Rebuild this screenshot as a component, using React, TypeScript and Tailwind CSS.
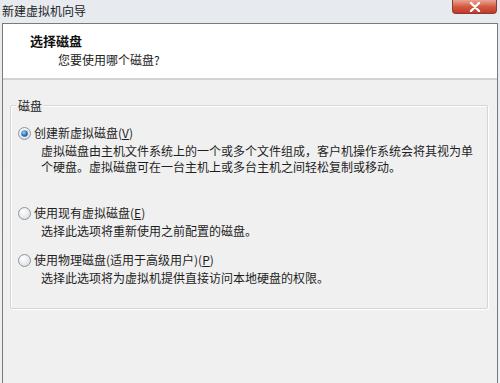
const font = "font-['Microsoft_YaHei','Noto_Sans_CJK_SC',sans-serif]";

type Option = {
  label: string;
  key: string;
  desc: string[];
  checked?: boolean;
  gap: string;
};

const options: Option[] = [
  {
    label: "创建新虚拟磁盘(",
    key: "V",
    desc: [
      "虚拟磁盘由主机文件系统上的一个或多个文件组成，客户机操作系统会将其视为单",
      "个硬盘。虚拟磁盘可在一台主机上或多台主机之间轻松复制或移动。",
    ],
    checked: true,
    gap: "mt-0",
  },
  {
    label: "使用现有虚拟磁盘(",
    key: "E",
    desc: ["选择此选项将重新使用之前配置的磁盘。"],
    gap: "mt-[30px]",
  },
  {
    label: "使用物理磁盘(适用于高级用户)(",
    key: "P",
    desc: ["选择此选项将为虚拟机提供直接访问本地硬盘的权限。"],
    gap: "mt-[13px]",
  },
];

function Radio({ checked }: { checked?: boolean }) {
  return (
    <svg width="13" height="13" viewBox="0 0 13 13" className="shrink-0">
      <defs>
        <radialGradient id="rg" cx="0.4" cy="0.35" r="0.7">
          <stop offset="0" stopColor="#ffffff" />
          <stop offset="1" stopColor="#d8dde3" />
        </radialGradient>
        <radialGradient id="dot" cx="0.4" cy="0.35" r="0.7">
          <stop offset="0" stopColor="#9fd3f5" />
          <stop offset="0.6" stopColor="#2c7ec1" />
          <stop offset="1" stopColor="#174f85" />
        </radialGradient>
      </defs>
      <circle cx="6.5" cy="6.5" r="6" fill="url(#rg)" stroke="#8e959c" strokeWidth="1" />
      {checked && <circle cx="6.5" cy="6.5" r="3.3" fill="url(#dot)" />}
    </svg>
  );
}

export default function App() {
  return (
    <div className={`w-[500px] h-[383px] overflow-hidden bg-gradient-to-b from-[#e7ebf0] to-[#eef1f4] flex flex-col text-[12px] leading-[16px] text-[#1e1e1e] ${font}`}>
      {/* title bar */}
      <div className="relative h-[23px] shrink-0">
        <span className="absolute left-[2px] top-[3px] text-[12px] text-[#222]">新建虚拟机向导</span>
        <div className="absolute right-[3px] top-0 w-[45px] h-[14px] rounded-b-[4px] border border-t-0 border-[#8a3a2e] bg-gradient-to-b from-[#e8a596] via-[#d45a40] to-[#c0392b] flex items-center justify-center">
          <svg width="12" height="10" viewBox="0 0 12 10">
            <path d="M2 1 L10 9 M10 1 L2 9" stroke="#ffffff" strokeWidth="2.4" strokeLinecap="round" />
          </svg>
        </div>
      </div>

      {/* window client */}
      <div className="ml-[2px] w-[496px] flex-1 border-l border-r border-t border-[#7a7a7a] bg-[#f0f0f0] flex flex-col">
        {/* header */}
        <div className="h-[56px] bg-white border-b-2 border-[#d2d2d2] pl-[27px] pt-[8px] shrink-0">
          <div className="font-bold text-[13px] leading-[17px] text-[#111]">选择磁盘</div>
          <div className="pl-[28px] mt-[3px] text-[12px] text-[#222]">您要使用哪个磁盘?</div>
        </div>

        {/* group box */}
        <div className="relative mt-[25px] ml-[7px] mr-[9px] h-[204px] border border-[#d5d5d5] shadow-[inset_1px_1px_0_#ffffff,1px_1px_0_#ffffff] rounded-[2px]">
          <span className="absolute left-[5px] -top-[8px] bg-[#f0f0f0] px-[2px] text-[#222]">磁盘</span>
          <div className="pt-[19px] pl-[7px] flex flex-col">
            {options.map((o, i) => (
              <div key={i} className={o.gap}>
                <div className="flex items-center gap-[3px]">
                  <Radio checked={o.checked} />
                  <span>
                    {o.label}
                    <span className="underline">{o.key}</span>)
                  </span>
                </div>
                <div className="pl-[23px] mt-[2px]">
                  {o.desc.map((d, j) => (
                    <div key={j}>{d}</div>
                  ))}
                </div>
              </div>
            ))}
          </div>
        </div>
      </div>
    </div>
  );
}
